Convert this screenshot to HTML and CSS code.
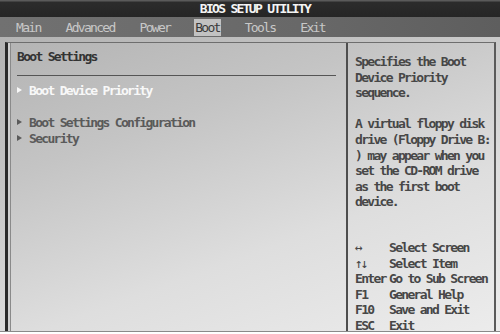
FILE: index.html
```html
<!DOCTYPE html>
<html>
<head>
<meta charset="utf-8">
<link rel="stylesheet" href="styles.css">
</head>
<body>
<div class="screen">
  <header class="title">BIOS SETUP UTILITY</header>
  <nav class="menu">
    <span class="tab">Main</span>
    <span class="tab">Advanced</span>
    <span class="tab">Power</span>
    <span class="tab active">Boot</span>
    <span class="tab">Tools</span>
    <span class="tab">Exit</span>
  </nav>
  <main class="body">
    <div class="box">
      <section class="left">
        <div class="heading">Boot Settings</div>
        <div class="rule"></div>
        <ul class="items">
          <li class="item selected"><i class="tri"></i>Boot Device Priority</li>
          <li class="blank"></li>
          <li class="item"><i class="tri"></i>Boot Settings Configuration</li>
          <li class="item"><i class="tri"></i>Security</li>
        </ul>
      </section>
      <aside class="right">
        <p class="desc">Specifies the Boot<br>Device Priority<br>sequence.</p>
        <p class="desc">A virtual floppy disk<br>drive (Floppy Drive B:<br>) may appear when you<br>set the CD-ROM drive<br>as the first boot<br>device.</p>
        <div class="help">
          <span class="key arrows">&#8596;</span><span class="act">Select Screen</span>
          <span class="key arrows">&#8593;&#8595;</span><span class="act">Select Item</span>
          <span class="key">Enter</span><span class="act">Go to Sub Screen</span>
          <span class="key">F1</span><span class="act">General Help</span>
          <span class="key">F10</span><span class="act">Save and Exit</span>
          <span class="key">ESC</span><span class="act">Exit</span>
        </div>
      </aside>
    </div>
  </main>
  <div class="foot"></div>
</div>
</body>
</html>
```

FILE: styles.css
```css
* { box-sizing: border-box; }
html, body { margin: 0; padding: 0; background: #fff; }
body {
  font-family: "DejaVu Sans Mono", "Liberation Mono", monospace;
  font-size: 13px;
  font-weight: bold;
  letter-spacing: -1.7px;
  line-height: 15.6px;
}
.screen {
  width: 500px;
  height: 334px;
  display: flex;
  flex-direction: column;
}
.title {
  height: 17px;
  flex: none;
  background: linear-gradient(#5a5a5a 0, #5a5a5a 1px, #2c2c2c 2px, #252525 100%);
  color: #f4f4f4;
  text-align: center;
  padding-left: 10px;
  line-height: 18px;
}
.menu {
  height: 20px;
  flex: none;
  background: linear-gradient(90deg, #717171, #686868 60%, #5e5e5e);
  display: flex;
  align-items: center;
  gap: 25px;
  padding-left: 16px;
  color: #c8c8c8;
  font-weight: normal;
}
.tab { line-height: 17px; height: 17px; margin-top: 1px; }
.tab.active {
  background: #c2c2c2;
  color: #3a3a3a;
  padding: 0 1px;
  margin-left: -1px;
  margin-right: -1px;
}
.body {
  flex: none;
  height: 294px;
  background: linear-gradient(160deg, #b3b3b3 0%, #c4c4c4 30%, #dedede 65%, #ececec 100%);
  padding: 5px 4px 0 5px;
}
.box {
  height: 100%;
  display: grid;
  grid-template-columns: 338px 1fr;
  border-top: 1px solid #6e6e6e;
  border-left: 3px solid #2a2a2a;
  border-right: 2px solid #5a5a5a;
  box-shadow: inset 2px 0 0 #d0d0d0, inset 3px 0 0 #8a8a8a;
}
.left {
  padding: 6px 0 0 9px;
}
.heading { color: #333; }
.rule {
  height: 1px;
  background: #555;
  margin: 10px 10px 7px 0;
}
.items { list-style: none; margin: 0; padding: 0; }
.item { color: #5a5a5a; display: flex; align-items: center; height: 16px; }
.item.selected { color: #f8f8f8; }
.blank { height: 16px; }
.tri {
  display: inline-block;
  width: 0;
  height: 0;
  border-left: 5px solid currentColor;
  border-top: 3.5px solid transparent;
  border-bottom: 3.5px solid transparent;
  margin: 0 7px 1px 0;
}
.right {
  border-left: 2px solid #4e4e4e;
  padding: 11px 0 0 7px;
  color: #474747;
  min-height: 0;
}
.desc { margin: 0 0 15.6px 0; }
.help {
  margin-top: 30px;
  display: grid;
  grid-template-columns: 34px 1fr;
}
.key.arrows { font-weight: normal; letter-spacing: -2px; }
.foot {
  flex: 1;
  border-top: 1px solid #8a8a8a;
}
```
